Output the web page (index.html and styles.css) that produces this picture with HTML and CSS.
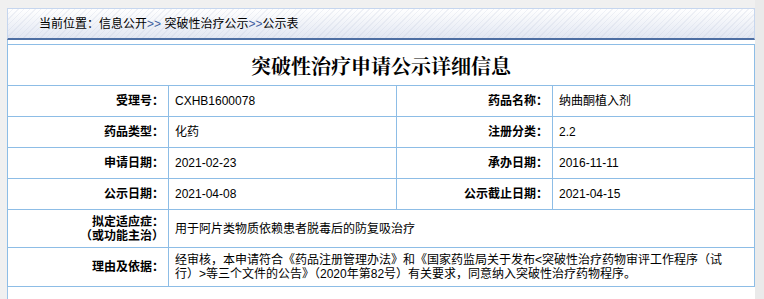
FILE: index.html
```html
<!DOCTYPE html>
<html lang="zh-CN">
<head>
<meta charset="utf-8">
<title>突破性治疗申请公示详细信息</title>
<link rel="stylesheet" href="styles.css">
</head>
<body>
<div class="wrap">
  <div class="crumb">当前位置：信息公开<span class="arr">&gt;&gt; </span>突破性治疗公示<span class="arr">&gt;&gt;</span>公示表</div>
  <div class="grid">
    <div class="title">突破性治疗申请公示详细信息</div>

    <div class="lab">受理号：</div>
    <div class="val">CXHB1600078</div>
    <div class="lab">药品名称：</div>
    <div class="val">纳曲酮植入剂</div>

    <div class="lab">药品类型：</div>
    <div class="val">化药</div>
    <div class="lab">注册分类：</div>
    <div class="val">2.2</div>

    <div class="lab">申请日期：</div>
    <div class="val">2021-02-23</div>
    <div class="lab">承办日期：</div>
    <div class="val">2016-11-11</div>

    <div class="lab">公示日期：</div>
    <div class="val">2021-04-08</div>
    <div class="lab">公示截止日期：</div>
    <div class="val">2021-04-15</div>

    <div class="lab two">拟定适应症：<br>（或功能主治）</div>
    <div class="val wide">用于阿片类物质依赖患者脱毒后的防复吸治疗</div>

    <div class="lab">理由及依据：</div>
    <div class="val wide">经审核，本申请符合《药品注册管理办法》和《国家药监局关于发布&lt;突破性治疗药物审评工作程序（试行）&gt;等三个文件的公告》（2020年第82号）有关要求，同意纳入突破性治疗药物程序。</div>
  </div>
</div>
</body>
</html>
```

FILE: styles.css
```css
html {
  background: linear-gradient(to right, #f0f0f0 755px, #eaeaea 755px);
}
html, body {
  margin: 0;
  padding: 0;
}
body {
  background: transparent;
  padding: 8px 0 0 7px;
  font-family: "Liberation Sans", "Noto Sans CJK SC", sans-serif;
  font-size: 12px;
  color: #000;
}
.wrap {
  width: 748px;
  min-height: calc(100vh - 8px);
  background: #fff;
  box-shadow: inset 1px 0 0 #9cc4e8;
  box-sizing: border-box;
}
.crumb {
  height: 29px;
  border: 1px solid #c6d6ee;
  border-bottom: 2px solid #4e6fa3;
  padding-left: 31px;
  display: flex;
  align-items: center;
  line-height: 1;
  color: #000;
  background:
    repeating-linear-gradient(135deg, rgba(255,255,255,0) 0 3px, rgba(190,198,218,0.22) 3px 4px),
    linear-gradient(#ffffff, #e2e7f2);
}
.crumb .arr {
  color: #3f5f9f;
  white-space: pre;
}
.grid {
  margin-top: 4px;
  display: grid;
  grid-template-columns: 160px 227px 155px 201px;
  grid-template-rows: 40px repeat(4, 30px) 37px 38px;
  gap: 1px;
  padding: 1px;
  background: #8dbde6;
}
.grid > div {
  background: #fff;
  display: flex;
  align-items: center;
}
.title {
  grid-column: 1 / -1;
  justify-content: center;
  font-family: "Noto Serif CJK SC", "Noto Sans CJK SC", serif;
  font-weight: bold;
  font-size: 20px;
}
.lab {
  justify-content: flex-end;
  padding-right: 4px;
  text-align: right;
  font-family: "Liberation Sans", "Noto Sans CJK SC", sans-serif;
  font-weight: bold;
  line-height: 14px;
}
.val {
  padding-left: 6px;
  line-height: 14px;
}
.wide {
  grid-column: 2 / -1;
  padding-right: 22px;
}
```
